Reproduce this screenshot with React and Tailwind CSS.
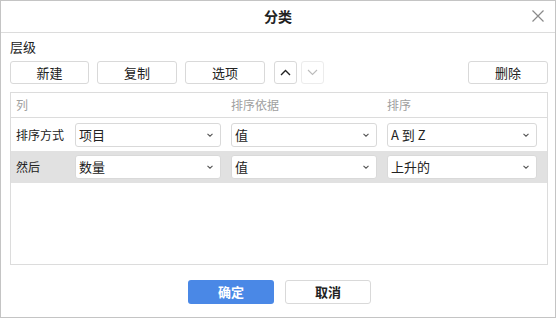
import React from "react";

const font = { fontFamily: '"Noto Sans CJK SC", "Noto Sans", sans-serif' };

function Chevron() {
  return (
    <svg width="6" height="4" viewBox="0 0 6 4" className="shrink-0">
      <path d="M0.5 0.8 L3 3.2 L5.5 0.8" fill="none" stroke="#555" strokeWidth="1.1" />
    </svg>
  );
}

function Select({ value }) {
  return (
    <div className="h-[24px] flex items-center justify-between border border-[#d9d9d9] rounded-[3px] bg-white pl-[3px] pr-[7px] text-[13px] text-[#222]">
      <span>{value}</span>
      <Chevron />
    </div>
  );
}

function Btn({ children, className = "" }) {
  return (
    <div
      className={
        "h-[23px] flex items-center justify-center border border-[#d9d9d9] rounded-[3px] bg-white text-[13px] text-[#222] " +
        className
      }
    >
      {children}
    </div>
  );
}

export default function App() {
  return (
    <div
      style={font}
      className="w-[556px] h-[318px] border border-[#c4c4c4] bg-white flex flex-col"
    >
      <div className="h-[32px] shrink-0 border-b border-[#dcdcdc] relative flex items-center justify-center">
        <span className="text-[14px] font-bold text-[#222]">分类</span>
        <svg
          width="12"
          height="12"
          viewBox="0 0 12 12"
          className="absolute right-[11px] top-[9px]"
        >
          <path d="M0.5 0.5 L11.5 11.5 M11.5 0.5 L0.5 11.5" stroke="#8a8a8a" strokeWidth="1.2" />
        </svg>
      </div>
      <div className="flex-1 flex flex-col pl-[9px] pr-[7px]">
        <div className="pt-[5px] h-[23px] text-[13px] leading-[18px] text-[#222]">层级</div>
        <div className="mt-[5px] flex items-center">
          <Btn className="w-[79px]">新建</Btn>
          <Btn className="w-[80px] ml-[8px]">复制</Btn>
          <Btn className="w-[80px] ml-[8px]">选项</Btn>
          <Btn className="w-[23px] ml-[9px]">
            <svg width="11" height="7" viewBox="0 0 11 7">
              <path d="M1 6 L5.5 1.5 L10 6" fill="none" stroke="#222" strokeWidth="1.4" />
            </svg>
          </Btn>
          <Btn className="w-[23px] ml-[4px] border-[#ececec]">
            <svg width="11" height="7" viewBox="0 0 11 7">
              <path d="M1 1 L5.5 5.5 L10 1" fill="none" stroke="#bbb" strokeWidth="1.1" />
            </svg>
          </Btn>
          <div className="flex-1" />
          <Btn className="w-[80px]">删除</Btn>
        </div>
        <div className="mt-[8px] h-[173px] border border-[#dcdcdc] flex flex-col">
          <div className="h-[25px] shrink-0 border-b border-[#dcdcdc] grid grid-cols-[49px_146px_146px_150px] gap-x-[10px] pl-[5px] items-center text-[12px] text-[#a0a0a0]">
            <span>列</span>
            <span></span>
            <span>排序依据</span>
            <span>排序</span>
          </div>
          <div className="h-[33px] shrink-0 grid grid-cols-[49px_146px_146px_150px] gap-x-[10px] pl-[5px] items-center text-[12px] text-[#222]">
            <span>排序方式</span>
            <Select value="项目" />
            <Select value="值" />
            <Select value="A 到 Z" />
          </div>
          <div className="h-[32px] shrink-0 bg-[#e1e1e1] grid grid-cols-[49px_146px_146px_150px] gap-x-[10px] pl-[5px] items-center text-[12px] text-[#222]">
            <span>然后</span>
            <Select value="数量" />
            <Select value="值" />
            <Select value="上升的" />
          </div>
        </div>
        <div className="flex justify-center gap-[11px] mt-[15px] pl-[1px]">
          <div className="w-[86px] h-[24px] rounded-[3px] bg-[#4a88e6] text-white text-[13px] font-bold flex items-center justify-center">
            确定
          </div>
          <div className="w-[86px] h-[24px] rounded-[3px] border border-[#d9d9d9] bg-white text-[#222] text-[13px] font-bold flex items-center justify-center">
            取消
          </div>
        </div>
      </div>
    </div>
  );
}
